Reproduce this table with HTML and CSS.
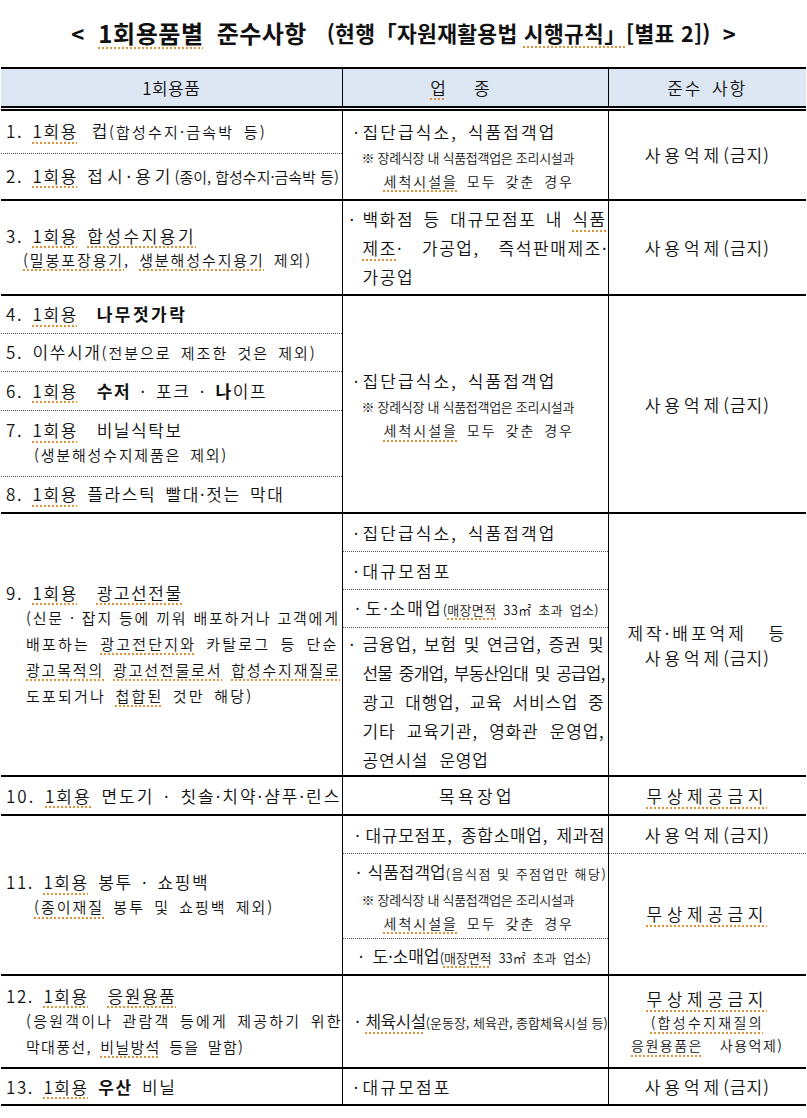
FILE: index.html
```html
<!DOCTYPE html>
<html lang="ko">
<head>
<meta charset="utf-8">
<title>1회용품별 준수사항</title>
<link rel="stylesheet" href="styles.css">
</head>
<body>
<h1 class="title">
  <span class="lt">&lt;</span>
  <span class="t1 sp">1회용품별</span>
  <span class="t2">준수사항</span>
  <span class="t3">(현행「자원재활용법 <span class="sp">시행규칙」</span>[별표 2])</span>
  <span class="gt">&gt;</span>
</h1>
<table class="rules">
  <colgroup><col class="c1"><col class="c2"><col class="c3"></colgroup>
  <thead>
    <tr>
      <th class="i h1">1회용품</th>
      <th class="h2"><span class="sp">업</span><span class="gap"></span>종</th>
      <th class="h3">준수 사항</th>
    </tr>
  </thead>
  <tbody>
    <tr class="r45">
      <td class="i"><div class="it">1. <span class="sp">1회용</span> &#8198;컵<span class="sm ls22">(합성수지·금속박 등)</span></div></td>
      <td rowspan="2" class="biz">
        <div class="ln ls21"><span class="bu">·</span>집단급식소, 식품접객업</div>
        <div class="note">※ 장례식장 내 식품접객업은 조리시설과</div>
        <div class="note2"><span class="sp">세척시설을</span> 모두 갖춘 경우</div>
      </td>
      <td rowspan="2" class="rule">사용억제<span class="pr">(금지)</span></td>
    </tr>
    <tr class="r47">
      <td class="i dt"><div class="it">2. <span class="sp">1회용</span> <span class="ls4">접시·용기</span><span class="sm ls0 ws0">(종이, 합성수지·금속박 등)</span></div></td>
    </tr>

    <tr class="r95">
      <td class="i">
        <div class="it">3. <span class="sp">1회용</span> <span class="sp ls25">합성수지용기</span></div>
        <div class="sub sm ls19"><span class="sp">(밀봉포장용기</span>, <span class="sp">생분해성수지용기</span> 제외)</div>
      </td>
      <td class="biz">
        <div class="ln j"><span class="bu">·</span>백화점 등 대규모점포 내 <span class="sp">식품</span></div>
        <div class="ln cont j"><span class="sp">제조</span>· &nbsp;가공업, &nbsp;즉석판매제조·</div>
        <div class="ln cont">가공업</div>
      </td>
      <td class="rule">사용억제<span class="pr">(금지)</span></td>
    </tr>

    <tr class="r38">
      <td class="i"><div class="it">4. <span class="sp">1회용</span> &nbsp;<b class="ls25">나무젓가락</b></div></td>
      <td rowspan="5" class="biz">
        <div class="ln ls21"><span class="bu">·</span>집단급식소, 식품접객업</div>
        <div class="note">※ 장례식장 내 식품접객업은 조리시설과</div>
        <div class="note2"><span class="sp">세척시설을</span> 모두 갖춘 경우</div>
      </td>
      <td rowspan="5" class="rule">사용억제<span class="pr">(금지)</span></td>
    </tr>
    <tr class="r38"><td class="i dt"><div class="it">5. 이쑤시개<span class="sm ls2">(전분으로 제조한 것은 제외)</span></div></td></tr>
    <tr class="r39"><td class="i dt"><div class="it">6. <span class="sp">1회용</span> &nbsp;<b>수저</b> · 포크 · <b>나</b>이프</div></td></tr>
    <tr class="r66"><td class="i dt">
      <div class="it">7. <span class="sp">1회용</span> &nbsp;비닐식탁보</div>
      <div class="sub2 sm ls18">(생분해성수지제품은 제외)</div>
    </td></tr>
    <tr class="r37"><td class="i dt"><div class="it">8. <span class="sp">1회용</span> 플라스틱 빨대·젓는 막대</div></td></tr>

    <tr class="r38">
      <td rowspan="4" class="i">
        <div class="it">9. <span class="sp">1회용</span> &nbsp;<span class="sp">광고선전물</span></div>
        <div class="para sm">
          <div class="j ls18 ws0">(신문 · 잡지 등에 끼워 배포하거나 고객에게</div>
          <div class="j">배포하는 <span class="sp">광고전단지와</span> 카탈로그 등 단순</div>
          <div class="j ls18"><span class="sp">광고목적의</span> <span class="sp">광고선전물로서</span> <span class="sp">합성수지재질로</span></div>
          <div>도포되거나 <span class="sp">첩합된</span> 것만 해당)</div>
        </div>
      </td>
      <td class="biz"><div class="ln ls21"><span class="bu">·</span>집단급식소, 식품접객업</div></td>
      <td rowspan="4" class="rule">
        <div class="ls3">제작·배포억제 &nbsp;등</div>
        <div>사용억제<span class="pr">(금지)</span></div>
      </td>
    </tr>
    <tr class="r38"><td class="biz dt"><div class="ln ls22"><span class="bu">·</span>대규모점포</div></td></tr>
    <tr class="r38"><td class="biz dt"><div class="ln ls2"><span class="bu bu16">·</span>도·소매업<span class="xs ls03">(<span class="sp">매장면적</span> 33㎡ 초과 업소)</span></div></td></tr>
    <tr class="r149"><td class="biz dt dense">
      <div class="ln j"><span class="bu">·</span>금융업, 보험 및 연금업, 증권 및</div>
      <div class="ln cont j tight">선물 중개업, 부동산임대 및 공급업,</div>
      <div class="ln cont j">광고 대행업, 교육 서비스업 중</div>
      <div class="ln cont j">기타 교육기관, 영화관 운영업,</div>
      <div class="ln cont">공연시설 &nbsp;운영업</div>
    </td></tr>

    <tr class="r39">
      <td class="i"><div class="it ls2">10. <span class="sp">1회용</span> 면도기 · 칫솔·치약·샴푸·린스</div></td>
      <td class="biz ctr ls34">목욕장업</td>
      <td class="rule"><span class="sp wide">무상제공금지</span></td>
    </tr>

    <tr class="r38">
      <td rowspan="3" class="i">
        <div class="it">11. <span class="sp">1회용</span> 봉투 · 쇼핑백</div>
        <div class="sub2 sm ls2"><span class="sp">(종이재질</span> 봉투 및 쇼핑백 제외)</div>
      </td>
      <td class="biz"><div class="ln ls07"><span class="bu bu16">·</span>대규모점포, 종합소매업, 제과점</div></td>
      <td class="rule">사용억제<span class="pr">(금지)</span></td>
    </tr>
    <tr class="r85">
      <td class="biz dt">
        <div class="ln ls0"><span class="bu bu18">·</span>식품접객업<span class="xs ls15 ws0">(음식점 및 주점업만 해당)</span></div>
        <div class="note">※ 장례식장 내 식품접객업은 조리시설과</div>
        <div class="note2"><span class="sp">세척시설을</span> 모두 갖춘 경우</div>
      </td>
      <td rowspan="2" class="rule dt"><span class="sp wide">무상제공금지</span></td>
    </tr>
    <tr class="r37"><td class="biz dt"><div class="ln ls0"><span class="bu bu23">·</span>도·소매업<span class="xs ls0">(<span class="sp">매장면적</span> 33㎡ 초과 업소)</span></div></td></tr>

    <tr class="r93">
      <td class="i">
        <div class="it">12. <span class="sp">1회용</span> &nbsp;<span class="sp">응원용품</span></div>
        <div class="para sm">
          <div class="j">(응원객이나 관람객 등에게 제공하기 위한</div>
          <div class="ls13">막대풍선, <span class="sp">비닐방석</span> 등을 말함)</div>
        </div>
      </td>
      <td class="biz"><div class="ln"><span class="bu bu16">·</span><span class="sp lsn06">체육시설</span><span class="xs ls0 ws0">(운동장, 체육관, 종합체육시설 등)</span></div></td>
      <td class="rule">
        <div><span class="sp wide">무상제공금지</span></div>
        <div class="sm ls23"><span class="sp">(합성수지재질의</span></div>
        <div class="sm ls15"><span class="sp">응원용품은</span> &nbsp;사용억제)</div>
      </td>
    </tr>

    <tr class="r37">
      <td class="i"><div class="it">13. <span class="sp">1회용</span> <b>우산</b> 비닐</div></td>
      <td class="biz"><div class="ln ls22"><span class="bu">·</span>대규모점포</div></td>
      <td class="rule">사용억제<span class="pr">(금지)</span></td>
    </tr>
  </tbody>
</table>
</body>
</html>
```

FILE: styles.css
```css
* { box-sizing: border-box; }
html, body { margin: 0; padding: 0; background: #ffffff; }
body {
  width: 807px;
  font-family: "Noto Sans CJK KR", "Noto Sans", sans-serif;
  color: #111111;
}

/* ---------- title ---------- */
.title {
  margin: 0;
  height: 67px;
  display: flex;
  align-items: center;
  justify-content: center;
  font-weight: 700;
  white-space: nowrap;
  padding: 0 0 2px 0;
}
.lt, .gt { font-size: 22px; }
.t1 { font-size: 24px; letter-spacing: 0.6px; margin-left: 14px; }
.t2 { font-size: 24px; letter-spacing: 0.4px; margin-left: 13px; }
.t3 { font-size: 21.5px; letter-spacing: 0.3px; margin-left: 20px; }
.gt { margin-left: 12px; }

/* spell-check style underline */
.sp {
  text-decoration-line: underline;
  text-decoration-style: dotted;
  text-decoration-color: #e0943a;
  text-decoration-thickness: 1.5px;
  text-underline-offset: 4px;
}

/* ---------- table ---------- */
.rules {
  border-collapse: collapse;
  table-layout: fixed;
  width: 805px;
  margin-left: 1px;
  font-size: 17px;
  font-weight: 350;
  letter-spacing: 1.6px;
  word-spacing: 3px;
  line-height: 1.25;
}
.rules b { font-weight: 700; }
.c1 { width: 341px; }
.c2 { width: 266px; }
.c3 { width: 198px; }

th {
  height: 40px;
  background: #dde7f3;
  font-weight: 350;
  font-size: 17px;
  border-top: 2px solid #000;
  border-bottom: 5px double #000;
  border-left: 1px solid #000;
  padding: 0;
}
th.i, td.i { border-left: 0; }
.h1 { letter-spacing: 0.4px; }
.h2 { padding-right: 30px; letter-spacing: 0; }
.h3 { letter-spacing: 1.9px; }
.gap { display: inline-block; width: 28px; }

td {
  border-top: 2px solid #000;
  border-bottom: 0;
  border-left: 1px solid #000;
  padding: 0;
  vertical-align: middle;
}
td.dt { border-top: 1px dotted #555; }
tbody tr:last-child td { border-bottom: 2px solid #000; }

.r37 { height: 37px; }
.r38 { height: 38px; }
.r39 { height: 39px; }
.r45 { height: 45px; }
.r47 { height: 47px; }
.r66 { height: 66px; }
.r85 { height: 85px; }
.r93 { height: 93px; }
.r95 { height: 95px; }
.r149 { height: 149px; }

/* column 1 */
td.i { padding: 0 3px 0 5px; }
.it { white-space: nowrap; line-height: 24px; }
.sm { font-size: 15px; }
.sub { padding-left: 17px; line-height: 24px; white-space: nowrap; }
.sub2 { padding-left: 28px; line-height: 26px; white-space: nowrap; }
.para { padding-left: 20px; line-height: 26px; letter-spacing: 2.2px; }
.j { text-align: justify; text-align-last: justify; white-space: nowrap; }

/* column 2 */
td.biz { padding: 0 3px 0 7px; }
.ln { line-height: 29px; white-space: nowrap; }
.ln.cont { padding-left: 13px; }
.dense { letter-spacing: 0.8px; word-spacing: 0; }
.tight { letter-spacing: -0.8px; }
.bu { display: inline-block; width: 13px; text-align: center; letter-spacing: 0; }
.bu16 { width: 16px; }
.bu18 { width: 18px; }
.bu23 { width: 23px; }
.xs { font-size: 13px; }
.note {
  font-size: 13px;
  letter-spacing: -0.3px;
  word-spacing: 0;
  line-height: 24px;
  padding-left: 12px;
  white-space: nowrap;
}
.note2 {
  font-size: 14px;
  letter-spacing: 2px;
  line-height: 23px;
  padding-left: 34px;
  white-space: nowrap;
}
.ctr { text-align: center; }

/* column 3 */
td.rule { text-align: center; padding: 0; line-height: 25px; letter-spacing: 4px; }
.pr { letter-spacing: 1px; }
.wide { letter-spacing: 4.6px; }
td.rule .sm { font-size: 14px; line-height: 23px; }

/* spacing helpers */
.ws0 { word-spacing: 0; }
.ls0 { letter-spacing: 0; }
.lsn06 { letter-spacing: -0.6px; }
.ls03 { letter-spacing: 0.3px; }
.ls07 { letter-spacing: 0.7px; }
.ls13 { letter-spacing: 1.3px; }
.ls15 { letter-spacing: 1.5px; }
.ls18 { letter-spacing: 1.8px; }
.ls19 { letter-spacing: 1.9px; }
.ls2 { letter-spacing: 2px; }
.ls21 { letter-spacing: 2.1px; }
.ls22 { letter-spacing: 2.2px; }
.ls23 { letter-spacing: 2.3px; }
.ls25 { letter-spacing: 2.5px; }
.ls3 { letter-spacing: 3px; }
.ls34 { letter-spacing: 3.4px; }
.ls4 { letter-spacing: 4px; }
```
